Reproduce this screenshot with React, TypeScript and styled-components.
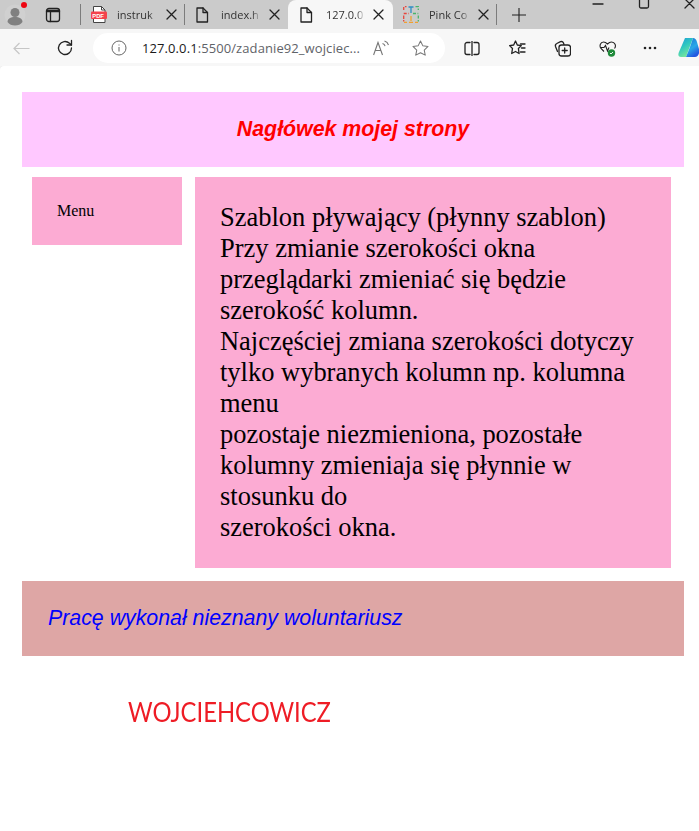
import React from "react";
import styled, { createGlobalStyle } from "styled-components";

const Global = createGlobalStyle`
  html, body { margin: 0; padding: 0; background: #f7f7f7; }
  body { width: 699px; height: 831px; overflow: hidden; font-family: "Liberation Serif", serif; color: #000; }
  #root { width: 699px; height: 831px; overflow: hidden; }
`;

const Chrome = styled.div`
  width: 699px;
  height: 66px;
  display: flex;
  flex-direction: column;
  font-family: "Open Sans", "Noto Sans", sans-serif;
`;
const TabStrip = styled.div`
  height: 29px;
  background: #cbcbcb;
  display: flex;
  align-items: center;
  position: relative;
`;
const Slot = styled.div<{ $w: number }>`
  width: ${(p) => p.$w}px;
  height: 29px;
  flex: none;
  display: flex;
  align-items: center;
  justify-content: center;
  position: relative;
`;
const Badge = styled.span`
  position: absolute;
  left: 21px;
  top: 2px;
  width: 6px;
  height: 6px;
  border-radius: 50%;
  background: #ee0612;
`;
const Divider = styled.span`
  width: 1px;
  height: 21px;
  background: #7c7c7c;
  flex: none;
`;
const Tab = styled.div<{ $active?: boolean; $w: number; $pad: number }>`
  box-sizing: border-box;
  width: ${(p) => p.$w}px;
  height: 29px;
  flex: none;
  display: flex;
  align-items: center;
  padding-left: ${(p) => p.$pad}px;
  background: ${(p) => (p.$active ? "#f7f7f7" : "transparent")};
  border-radius: ${(p) => (p.$active ? "8px 8px 0 0" : "0")};
`;
const TabTitle = styled.span<{ $w: number; $gap: number }>`
  width: ${(p) => p.$w}px;
  margin-left: ${(p) => p.$gap}px;
  font-size: 11px;
  color: #333;
  white-space: nowrap;
  -webkit-mask-image: linear-gradient(to right, #000 78%, transparent);
  mask-image: linear-gradient(to right, #000 78%, transparent);
`;
const WindowControls = styled.div`
  position: absolute;
  top: 0;
  left: 592px;
  width: 107px;
  height: 12px;
  display: flex;
  gap: 34px;
`;
const Toolbar = styled.div`
  height: 37px;
  box-sizing: border-box;
  background: #f7f7f7;
  display: flex;
  align-items: center;
  padding-top: 1px;
`;
const IconSlot = styled.div<{ $w: number }>`
  width: ${(p) => p.$w}px;
  flex: none;
  display: flex;
  justify-content: center;
  align-items: center;
`;
const AddressBar = styled.div`
  width: 352px;
  height: 30px;
  flex: none;
  box-sizing: border-box;
  margin: 0 5px 0 6px;
  padding-left: 18px;
  background: #fff;
  border-radius: 15px;
  display: flex;
  align-items: center;
`;
const Url = styled.span`
  margin-left: 15px;
  width: 220px;
  font-size: 13px;
  letter-spacing: 0.09px;
  white-space: nowrap;
  color: #5f6368;
`;
const UrlHost = styled.span`
  color: #1a1a1a;
`;

const Main = styled.main`
  box-sizing: border-box;
  width: 699px;
  height: 765px;
  padding: 26px 0 0 22px;
  background: #fff;
  border-radius: 4px 0 0 0;
  box-shadow: 0 -1px 0 #ececec;
`;
const Banner = styled.header<{ $bg: string; $color: string; $center?: boolean; $bold?: boolean }>`
  box-sizing: border-box;
  width: 662px;
  height: 75px;
  padding: 25px 26px;
  background: ${(p) => p.$bg};
  color: ${(p) => p.$color};
  text-align: ${(p) => (p.$center ? "center" : "left")};
  font: italic ${(p) => (p.$bold ? 700 : 400)} 21.33px/25px "Liberation Sans", Arial, sans-serif;
`;
const Columns = styled.div`
  display: flex;
  align-items: flex-start;
  gap: 13px;
  padding: 10px 0 13px 10px;
`;
const Menu = styled.nav`
  box-sizing: border-box;
  width: 150px;
  padding: 25px;
  background: #fcabd3;
  font-size: 16px;
  line-height: 18px;
`;
const Content = styled.section`
  box-sizing: border-box;
  width: 476px;
  padding: 25px;
  background: #fcabd3;
  font-size: 26.47px;
  line-height: 31px;
`;
const Signature = styled.p`
  margin: 41px 0 0 106px;
  color: #ee1c25;
  font: 400 26px/30px Lato, "Open Sans", sans-serif;
  transform: scaleX(0.915);
  transform-origin: left center;
  white-space: nowrap;
`;

const S = { fill: "none", stroke: "#222", strokeWidth: 1.3, strokeLinecap: "round" as const, strokeLinejoin: "round" as const };

const DocIcon = () => (
  <svg width="14" height="16" viewBox="0 0 14 16" {...S} style={{ flex: "none" }}>
    <path d="M2 1h6l4.500 4.500V15H2z" />
    <path d="M8 1v4.500h4.500" />
  </svg>
);
const CloseIcon = () => (
  <svg width="11" height="11" viewBox="0 0 11 11" {...S} style={{ marginLeft: 8, flex: "none" }}>
    <path d="M1 1l9 9M10 1l-9 9" />
  </svg>
);

export default function App() {
  return (
    <>
      <Global />
      <Chrome>
        <TabStrip>
          <Slot $w={30}>
            <svg width="22" height="22" viewBox="0 0 22 22">
              <circle cx="11" cy="11" r="10.500" fill="#d0d0d0" />
              <circle cx="11" cy="8.500" r="4.500" fill="#808080" />
              <path d="M3.500 18c0-3.500 3-5 7.500-5s7.500 1.500 7.500 5c-1.500 2.500-4.500 3.500-7.500 3.500s-6-1-7.500-3.500z" fill="#808080" />
            </svg>
            <Badge />
          </Slot>
          <Slot $w={46}>
            <svg width="16" height="16" viewBox="0 0 16 16" {...S}>
              <rect x="1.500" y="1.500" width="13" height="13" rx="2.500" />
              <path d="M2 4h12" strokeWidth="2.400" />
              <path d="M5.500 5v9.500" />
            </svg>
          </Slot>
          <Slot $w={8}><Divider /></Slot>
          <Tab $w={100} $pad={7}>
            <svg width="16" height="17" viewBox="0 0 16 17" style={{ flex: "none" }}>
              <path d="M2.500.5h8l3.500 3.500v12.500H2.500z" fill="#fff" stroke="#444" strokeWidth="1" />
              <path d="M10.500.5v3.500H14" fill="none" stroke="#444" strokeWidth="1" />
              <rect x="0" y="5.500" width="16" height="7.500" rx="1" fill="#f4424c" />
              <text x="1.300" y="11.500" fontSize="5.800" fontWeight="700" fill="#fff" fontFamily="Liberation Sans">PDF</text>
            </svg>
            <TabTitle $w={41} $gap={10}>instruk</TabTitle>
            <CloseIcon />
          </Tab>
          <Slot $w={1}><Divider /></Slot>
          <Tab $w={103} $pad={10}>
            <DocIcon />
            <TabTitle $w={40} $gap={12}>index.h</TabTitle>
            <CloseIcon />
          </Tab>
          <Tab $w={105} $pad={11} $active>
            <DocIcon />
            <TabTitle $w={39} $gap={13}>127.0.0</TabTitle>
            <CloseIcon />
          </Tab>
          <Tab $w={103} $pad={10}>
            <svg width="16" height="17" viewBox="0 0 16 17" style={{ flex: "none" }} fill="none" strokeWidth="1.300">
              <path d="M.7 4V.7H3.500M.7 7.500h5M.7 11v2M.7 9.500v6" stroke="#e8453c" strokeDasharray="3 1.500" />
              <path d="M5.500 1h5M8 1v6" stroke="#2f8fc4" />
              <path d="M12.500.7h2.800V4M10 7.500h5.300M15.300 9.500v6" stroke="#48b56a" strokeDasharray="3 1.500" />
              <path d="M1 16.300h3M6 16.300h4M12 16.300h3M8 10v5" stroke="#f0a030" />
            </svg>
            <TabTitle $w={41} $gap={10}>Pink Co</TabTitle>
            <CloseIcon />
          </Tab>
          <Slot $w={1}><Divider /></Slot>
          <Slot $w={43}>
            <svg width="14" height="14" viewBox="0 0 14 14" fill="none" stroke="#222" strokeWidth="1.100">
              <path d="M7 0v14M0 7h14" />
            </svg>
          </Slot>
          <WindowControls>
            <svg width="12" height="12" viewBox="0 0 12 12" {...S}>
              <path d="M1 4h10" />
            </svg>
            <svg width="12" height="12" viewBox="0 0 12 12" {...S}>
              <rect x="1.500" y="-4" width="9" height="12" rx="1.500" />
            </svg>
            <svg width="12" height="12" viewBox="0 0 12 12" {...S}>
              <path d="M1-1l9 9M10-1L1 8" />
            </svg>
          </WindowControls>
        </TabStrip>
        <Toolbar>
          <IconSlot $w={43}>
            <svg width="17" height="13" viewBox="0 0 17 13" fill="none" stroke="#c6c6c6" strokeWidth="1.200">
              <path d="M16.500 6.500H1M6.500 1L1 6.500 6.500 12" />
            </svg>
          </IconSlot>
          <IconSlot $w={44}>
            <svg width="18" height="18" viewBox="0 0 18 18" {...S}>
              <path d="M15.500 9a6.500 6.500 0 1 1-2-4.700L15.500 6" />
              <path d="M15.500 1.500V6H11" />
            </svg>
          </IconSlot>
          <AddressBar>
            <svg width="16" height="16" viewBox="0 0 16 16" fill="none" stroke="#666" strokeWidth="1" style={{ flex: "none" }}>
              <circle cx="8" cy="8" r="7" />
              <path d="M8 7v4.500M8 4.500v1" />
            </svg>
            <Url><UrlHost>127.0.0.1</UrlHost>:5500/zadanie92_wojciec...</Url>
            <svg width="16" height="16" viewBox="0 0 16 16" fill="none" stroke="#777" strokeWidth="1.100" style={{ marginLeft: 11, flex: "none" }}>
              <path d="M.6 15L5 2.500 9.500 15M2.200 10.500h5.600" />
              <path d="M9.500 3.500c1.300.4 2.200 1.300 2.600 2.600M11.500 1c2 .6 3.400 2 4 4" />
            </svg>
            <svg width="17" height="16" viewBox="0 0 18 17" fill="none" stroke="#777" strokeWidth="1.100" strokeLinejoin="round" style={{ marginLeft: 23, flex: "none" }}>
              <path d="M9 1l2.400 5 5.600.8-4 3.900 1 5.400L9 13.500 4 16.100l1-5.400-4-3.900L6.600 6z" />
            </svg>
          </AddressBar>
          <IconSlot $w={44}>
            <svg width="16" height="15" viewBox="0 0 16 15" {...S}>
              <path d="M6 1.500H3a2 2 0 0 0-2 2v8a2 2 0 0 0 2 2h3M8 0v15M10 1.500h3a2 2 0 0 1 2 2v8a2 2 0 0 1-2 2h-3" />
            </svg>
          </IconSlot>
          <IconSlot $w={46}>
            <svg width="17" height="16" viewBox="0 0 17 16" {...S}>
              <path d="M6.500 1l1.800 4 4 .6-2.900 2.900.7 5-3.600-2-3.800 2 .8-5-2.900-2.900 4.100-.6z" />
              <path d="M11.500 4H16M12.500 8H16M11.500 12H16" />
            </svg>
          </IconSlot>
          <IconSlot $w={44}>
            <svg width="17" height="17" viewBox="0 0 17 17" {...S}>
              <path d="M3.500 11.500L1.500 6.500c-.4-1.300.2-2.500 1.300-3L6.500 1.700c1.300-.5 2.500 0 3 1.300L10 4.500" />
              <rect x="5" y="5" width="11.500" height="11" rx="2.500" />
              <path d="M10.700 8v5M8.200 10.500h5" />
            </svg>
          </IconSlot>
          <IconSlot $w={46}>
            <svg width="17" height="17" viewBox="0 0 17 17">
              <path d="M5 11.500L2 8.500C0 6 1.500 2 4.500 2c2 0 3 1 4 2 1-1 2-2 4-2 3.500 0 5 4 3 6.500" fill="none" stroke="#222" strokeWidth="1.100" />
              <path d="M1.500 7.500h3.500l1.500-2 2 5.500 1.500-3.500" fill="none" stroke="#222" strokeWidth="1.100" />
              <circle cx="12.500" cy="13" r="3.700" fill="#1f8a3a" />
              <path d="M11 13l1 1 2-2" fill="none" stroke="#fff" strokeWidth="0.900" />
            </svg>
          </IconSlot>
          <IconSlot $w={40}>
            <svg width="14" height="4" viewBox="0 0 14 4" fill="#222">
              <circle cx="2" cy="2" r="1.300" />
              <circle cx="7" cy="2" r="1.300" />
              <circle cx="12" cy="2" r="1.300" />
            </svg>
          </IconSlot>
          <IconSlot $w={38}>
            <svg width="22" height="22" viewBox="0 0 22 22">
              <defs>
                <linearGradient id="cp1" x1="0" y1="0" x2="0.500" y2="1">
                  <stop offset="0" stopColor="#1d9bd8" />
                  <stop offset="0.500" stopColor="#30c8c0" />
                  <stop offset="1" stopColor="#7ae89a" />
                </linearGradient>
                <linearGradient id="cp2" x1="0" y1="0" x2="0.500" y2="1">
                  <stop offset="0" stopColor="#1a6fd0" />
                  <stop offset="0.600" stopColor="#29a8e8" />
                  <stop offset="1" stopColor="#2458e0" />
                </linearGradient>
              </defs>
              <path d="M7 1h8L8 20H3C0 20 0 17 1 15z" fill="url(#cp1)" />
              <path d="M15 1c2 0 3 1 4 4l2 7c1 4-1 8-4 8H8l4-10z" fill="url(#cp2)" />
            </svg>
          </IconSlot>
        </Toolbar>
      </Chrome>
      <Main>
        <Banner $bg="#ffc8ff" $color="#ff0000" $center $bold>Nagłówek mojej strony</Banner>
        <Columns>
          <Menu>Menu</Menu>
          <Content>
            Szablon pływający (płynny szablon)<br />
            Przy zmianie szerokości okna przeglądarki zmieniać się będzie szerokość kolumn.<br />
            Najczęściej zmiana szerokości dotyczy tylko wybranych kolumn np. kolumna menu<br />
            pozostaje niezmieniona, pozostałe kolumny zmieniaja się płynnie w stosunku do<br />
            szerokości okna.
          </Content>
        </Columns>
        <Banner $bg="#dea6a5" $color="#0000ff">Pracę wykonał nieznany woluntariusz</Banner>
        <Signature>WOJCIEHCOWICZ</Signature>
      </Main>
    </>
  );
}
